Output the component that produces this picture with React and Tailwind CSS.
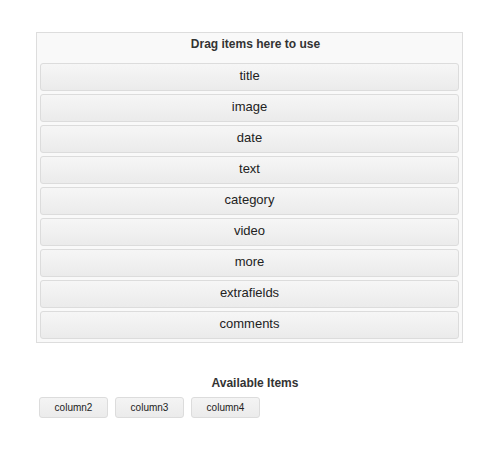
import React from "react";

const items = ["title", "image", "date", "text", "category", "video", "more", "extrafields", "comments"];
const available = ["column2", "column3", "column4"];

const App = () => {
  return (
    <div className="min-h-[468px] w-[496px] bg-white pt-[32px] pl-[36px] font-['Liberation_Sans',Arial,sans-serif]">
      <div className="w-[427px] border border-[#dddddd] bg-[#f9f9f9] px-[3px] pb-[3px]">
        <div className="pt-[3px] pb-[11px] pl-[12px] text-center text-[12px] font-bold leading-[16px] text-[#333333]">
          Drag items here to use
        </div>
        <div className="flex flex-col gap-[3px]">
          {items.map((item) => (
            <div
              key={item}
              className="flex h-[28px] items-center justify-center rounded-[3px] border border-[#dcdcdc] bg-gradient-to-b from-[#f6f6f6] to-[#ebebeb] pb-[2px] text-[13px] text-[#222222]"
            >
              {item}
            </div>
          ))}
        </div>
      </div>

      <div className="mt-[32px] w-[438px] text-center text-[12px] font-bold leading-[16px] text-[#333333]">
        Available Items
      </div>
      <div className="mt-[6px] ml-[3px] flex gap-[7px]">
        {available.map((col) => (
          <div
            key={col}
            className="flex h-[21px] w-[69px] items-center justify-center rounded-[3px] border border-[#dcdcdc] bg-gradient-to-b from-[#f4f4f4] to-[#ebebeb] text-[10px] text-[#222222]"
          >
            {col}
          </div>
        ))}
      </div>
    </div>
  );
};

export default App;
